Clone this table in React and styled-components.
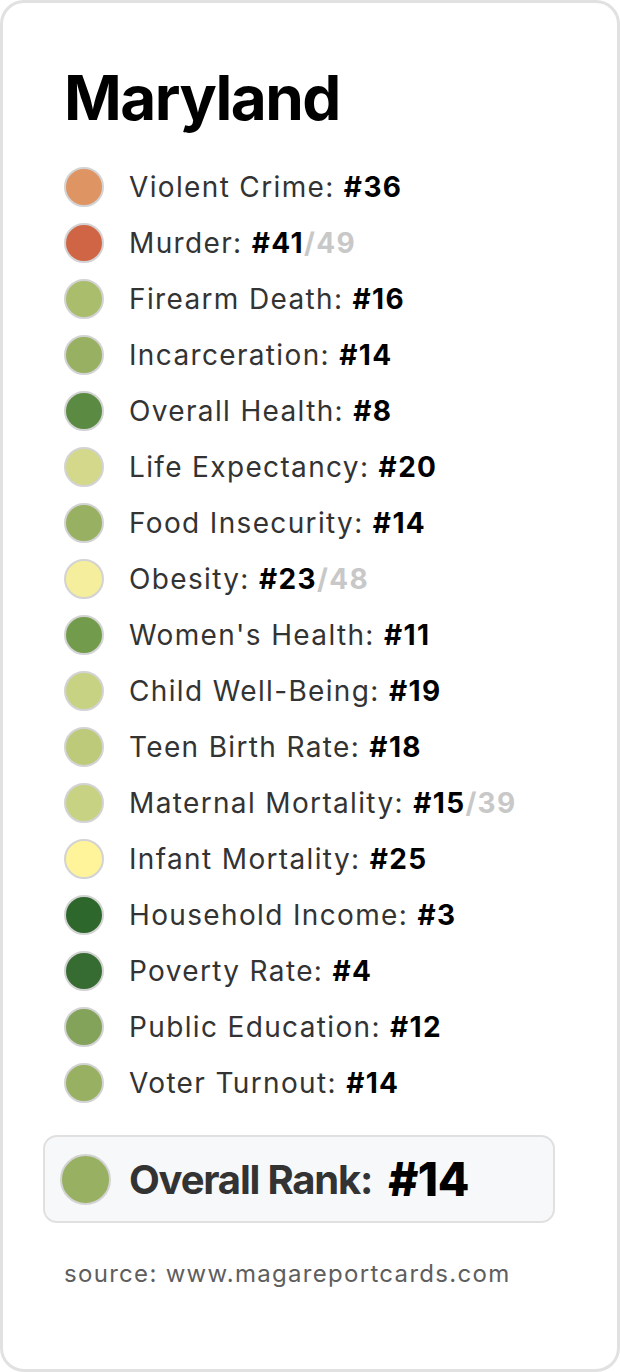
import React from 'react';
import styled, { createGlobalStyle } from 'styled-components';

const GlobalStyle = createGlobalStyle`
  html, body {
    margin: 0;
    padding: 0;
    background: #ffffff;
  }
  * {
    box-sizing: border-box;
  }
`;

const S = {
  Card: styled.div`
    width: 620px;
    height: 1372px;
    border: 3px solid #e1e1e1;
    border-radius: 24px;
    background: #ffffff;
    padding: 57px 61px 0 61px;
    font-family: Inter, 'Liberation Sans', sans-serif;
    display: flex;
    flex-direction: column;
  `,
  Title: styled.h1`
    margin: 0 0 23px 0;
    font-size: 62px;
    line-height: 76px;
    font-weight: 700;
    color: #000;
    letter-spacing: -1.5px;
  `,
  List: styled.ul`
    list-style: none;
    margin: 0;
    padding: 0;
    display: flex;
    flex-direction: column;
  `,
  Row: styled.li`
    display: flex;
    align-items: center;
    height: 56px;
    gap: 25px;
  `,
  Dot: styled.span`
    flex: 0 0 auto;
    width: ${(p) => p.$size || 40}px;
    height: ${(p) => p.$size || 40}px;
    border-radius: 50%;
    border: 2px solid #d3d3d3;
    background: ${(p) => p.$color};
  `,
  Label: styled.span`
    font-size: 28px;
    color: #333333;
    letter-spacing: 1.35px;
  `,
  Rank: styled.b`
    font-weight: 700;
    color: #000;
  `,
  Of: styled.span`
    font-weight: 700;
    color: #c8c8c8;
  `,
  Overall: styled.div`
    margin: 24px 0 0 -21px;
    width: 512px;
    height: 88px;
    background: #f7f8fa;
    border: 2px solid #e0e0e0;
    border-radius: 14px;
    display: flex;
    align-items: center;
    padding: 0 15px;
    gap: 18px;
  `,
  OverallLabel: styled.span`
    font-size: 40px;
    font-weight: 700;
    color: #333333;
    letter-spacing: -1.2px;
  `,
  OverallRank: styled.span`
    margin-left: -2px;
    font-size: 46px;
    font-weight: 800;
    color: #000;
    letter-spacing: -0.5px;
  `,
  Source: styled.p`
    margin: 36px 0 0 0;
    font-size: 24px;
    color: #5e5e5e;
    letter-spacing: 1.3px;
  `,
};

const rows = [
  { label: 'Violent Crime', rank: 36, color: '#df9464' },
  { label: 'Murder', rank: 41, of: 49, color: '#d06546' },
  { label: 'Firearm Death', rank: 16, color: '#a9bd6c' },
  { label: 'Incarceration', rank: 14, color: '#98b061' },
  { label: 'Overall Health', rank: 8, color: '#5b8a42' },
  { label: 'Life Expectancy', rank: 20, color: '#d3d88a' },
  { label: 'Food Insecurity', rank: 14, color: '#98b061' },
  { label: 'Obesity', rank: 23, of: 48, color: '#f5ee9c' },
  { label: "Women's Health", rank: 11, color: '#729c4c' },
  { label: 'Child Well-Being', rank: 19, color: '#c8d283' },
  { label: 'Teen Birth Rate', rank: 18, color: '#bdca79' },
  { label: 'Maternal Mortality', rank: 15, of: 39, color: '#c8d283' },
  { label: 'Infant Mortality', rank: 25, color: '#fff49a' },
  { label: 'Household Income', rank: 3, color: '#2d672c' },
  { label: 'Poverty Rate', rank: 4, color: '#366c32' },
  { label: 'Public Education', rank: 12, color: '#83a25a' },
  { label: 'Voter Turnout', rank: 14, color: '#98b061' },
];

function App() {
  return (
    <>
      <GlobalStyle />
      <S.Card>
        <S.Title>Maryland</S.Title>
        <S.List>
          {rows.map((r) => (
            <S.Row key={r.label}>
              <S.Dot $color={r.color} />
              <S.Label>
                {r.label}: <S.Rank>#{r.rank}</S.Rank>
                {r.of && <S.Of>/{r.of}</S.Of>}
              </S.Label>
            </S.Row>
          ))}
        </S.List>
        <S.Overall>
          <S.Dot $color="#98b062" $size={51} />
          <S.OverallLabel>Overall Rank:</S.OverallLabel>
          <S.OverallRank>#14</S.OverallRank>
        </S.Overall>
        <S.Source>source: www.magareportcards.com</S.Source>
      </S.Card>
    </>
  );
}

export default App;
